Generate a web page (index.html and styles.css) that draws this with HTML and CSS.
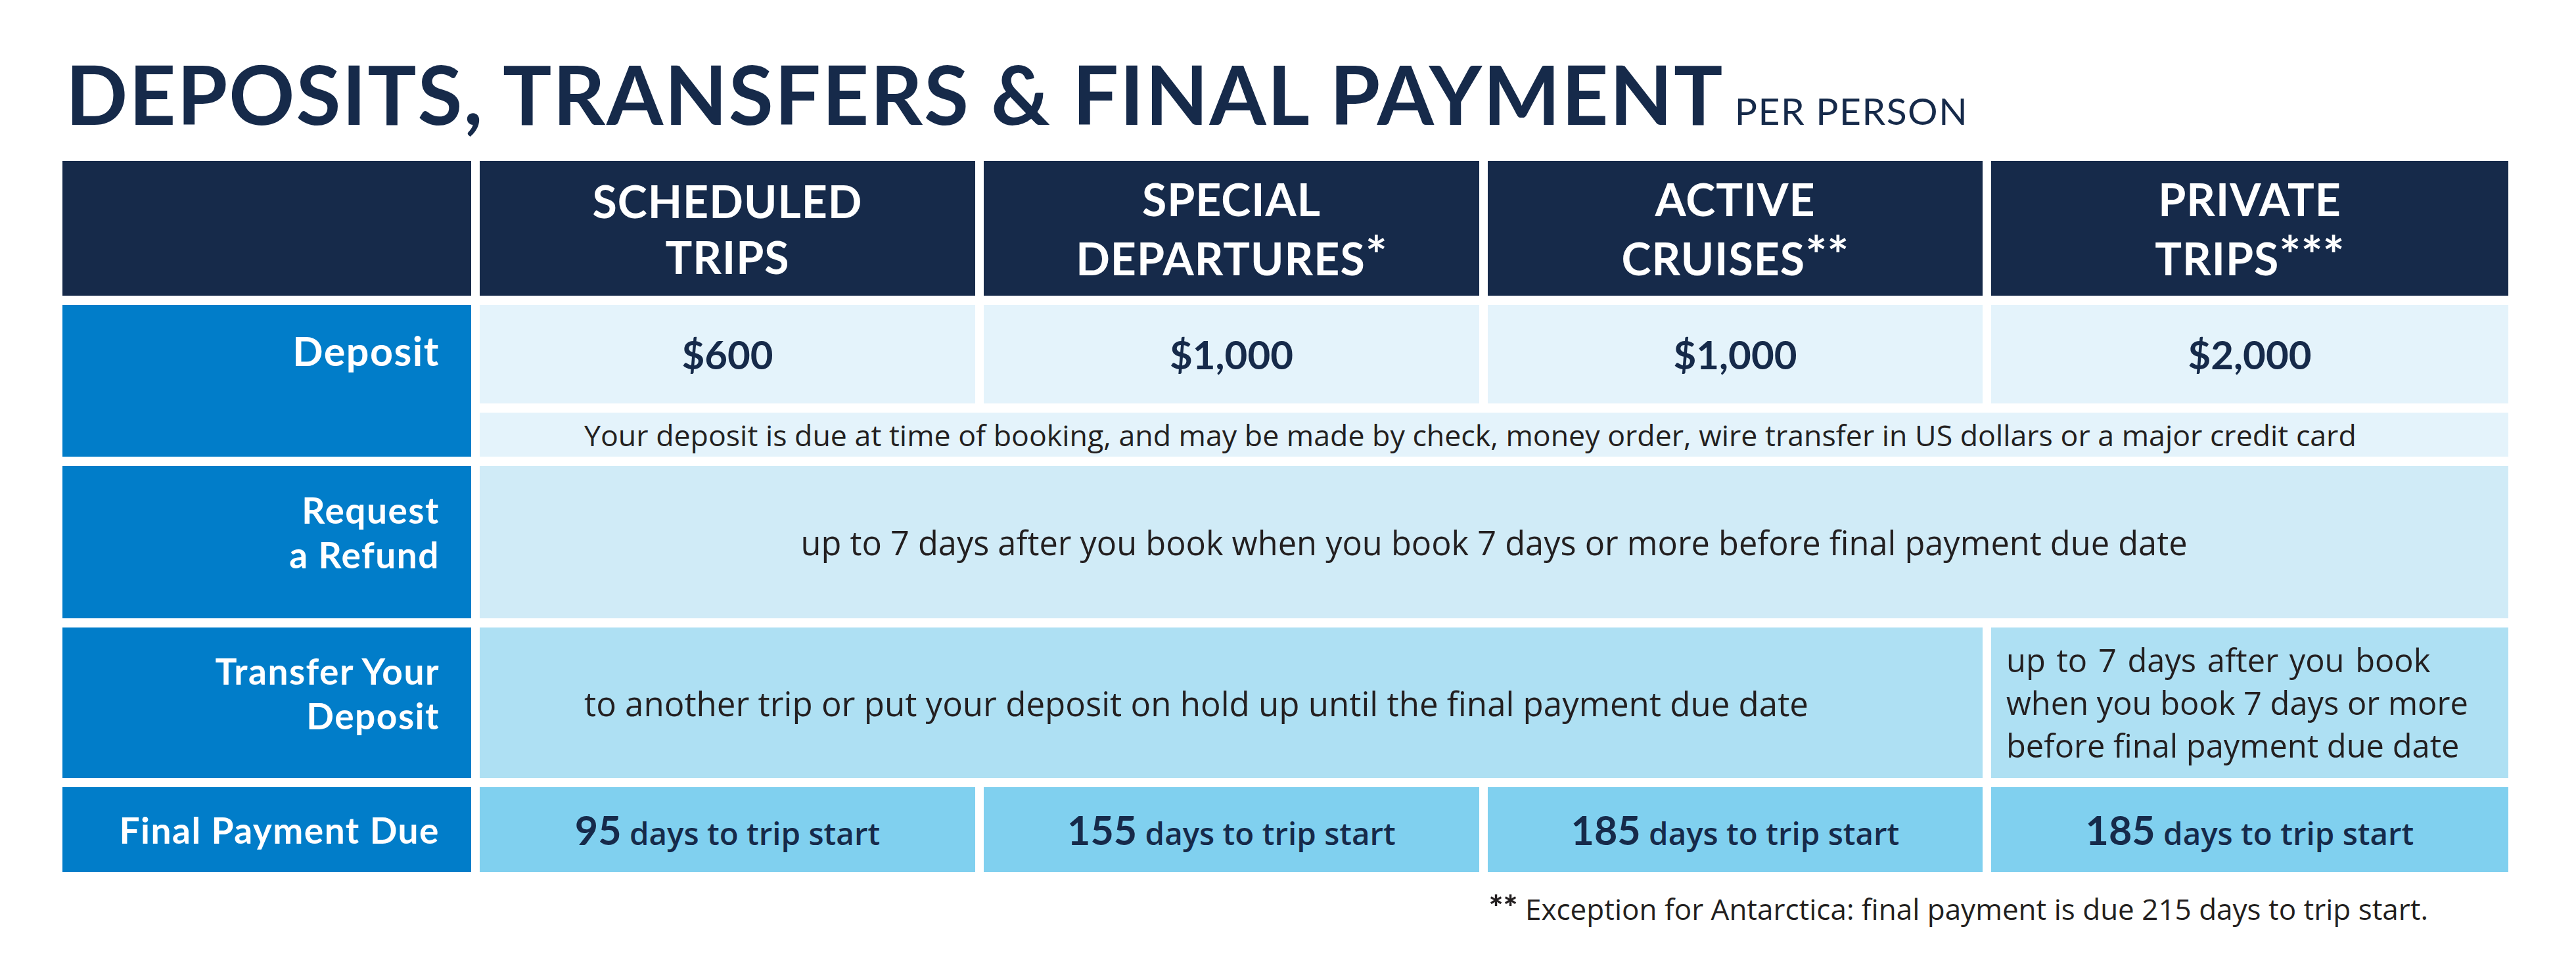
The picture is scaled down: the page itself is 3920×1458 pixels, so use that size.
FILE: index.html
```html
<!DOCTYPE html>
<html lang="en">
<head>
<meta charset="utf-8">
<title>Deposits, Transfers &amp; Final Payment</title>
<link rel="stylesheet" href="styles.css">
</head>
<body>
<div class="page">
  <h1 class="title">DEPOSITS, TRANSFERS &amp; FINAL PAYMENT <span class="per">PER PERSON</span></h1>
  <div class="table">
    <div class="cell head corner"></div>
    <div class="cell head"><p class="txt">SCHEDULED<br>TRIPS</p></div>
    <div class="cell head"><p class="txt">SPECIAL<br>DEPARTURES<span class="ast">*</span></p></div>
    <div class="cell head"><p class="txt">ACTIVE<br>CRUISES<span class="ast">**</span></p></div>
    <div class="cell head"><p class="txt">PRIVATE<br>TRIPS<span class="ast">***</span></p></div>

    <div class="cell label label-deposit"><p class="txt">Deposit</p></div>
    <div class="cell amount"><p class="txt">$600</p></div>
    <div class="cell amount"><p class="txt">$1,000</p></div>
    <div class="cell amount"><p class="txt">$1,000</p></div>
    <div class="cell amount"><p class="txt">$2,000</p></div>
    <div class="cell note"><p class="txt">Your deposit is due at time of booking, and may be made by check, money order, wire transfer in US dollars or a major credit card</p></div>

    <div class="cell label label-multi"><p class="txt">Request<br>a Refund</p></div>
    <div class="cell refund"><p class="txt">up to 7 days after you book when you book 7 days or more before final payment due date</p></div>

    <div class="cell label label-multi"><p class="txt">Transfer Your<br>Deposit</p></div>
    <div class="cell transfer"><p class="txt">to another trip or put your deposit on hold up until the final payment due date</p></div>
    <div class="cell transfer-private"><p class="txt"><span class="wide">up to 7 days after you book</span><br>when you book 7 days or more<br>before final payment due date</p></div>

    <div class="cell label"><p class="txt">Final Payment Due</p></div>
    <div class="cell final"><p class="txt"><b>95</b> days to trip start</p></div>
    <div class="cell final"><p class="txt"><b>155</b> days to trip start</p></div>
    <div class="cell final"><p class="txt"><b>185</b> days to trip start</p></div>
    <div class="cell final"><p class="txt"><b>185</b> days to trip start</p></div>
  </div>
  <p class="footnote"><b>**</b> Exception for Antarctica: final payment is due 215 days to trip start.</p>
</div>
</body>
</html>
```

FILE: styles.css
```css
html, body {
  margin: 0;
  padding: 0;
  background: #ffffff;
}
.page {
  width: 3920px;
  height: 1458px;
  font-family: "Lato", "Noto Sans", sans-serif;
  color: #162a4a;
  box-sizing: border-box;
  padding-top: 80px;
}
.title {
  margin: 0 0 0 100px;
  font-size: 124px;
  line-height: 124px;
  height: 165px;
  font-weight: 700;
  letter-spacing: 2px;
  color: #162a4a;
  white-space: nowrap;
}
.per {
  font-size: 57px;
  font-weight: 400;
  letter-spacing: 1.5px;
  margin-left: -12px;
}
.table {
  margin-left: 95px;
  display: grid;
  grid-template-columns: 622px 754px 754px 753px 787px;
  grid-template-rows: 205px 150px 67px 232px 229px 129px;
  column-gap: 13px;
  row-gap: 14px;
  width: 3722px;
}
.cell {
  display: flex;
  align-items: center;
  box-sizing: border-box;
}
.txt {
  margin: 0;
}
.head {
  background: #162a4a;
  color: #ffffff;
  font-weight: 700;
  font-size: 68px;
  line-height: 85px;
  justify-content: center;
  text-align: center;
  letter-spacing: 1px;
}
.ast {
  font-size: 78px;
  vertical-align: 2px;
  letter-spacing: 0;
}
.label {
  background: #017dc9;
  color: #ffffff;
  font-weight: 700;
  font-size: 55px;
  line-height: 68px;
  justify-content: flex-end;
  text-align: right;
  padding-right: 48px;
  letter-spacing: 1.5px;
}
.label-multi {
  padding-bottom: 30px;
}
.label-deposit {
  grid-row: span 2;
  align-items: flex-start;
  padding-top: 32px;
  font-size: 61px;
  line-height: 76px;
}
.amount {
  background: #e4f3fb;
  justify-content: center;
  font-weight: 700;
  font-size: 60px;
  color: #162a4a;
}
.note, .refund, .transfer, .transfer-private, .footnote {
  font-family: "Open Sans", "Lato", sans-serif;
  color: #231f20;
}
.note {
  grid-column: 2 / span 4;
  background: #e4f3fb;
  font-size: 44.7px;
  padding-left: 159px;
  white-space: nowrap;
}
.refund {
  grid-column: 2 / span 4;
  background: #d0ebf7;
  font-size: 50.5px;
  justify-content: center;
  white-space: nowrap;
}
.transfer {
  grid-column: 2 / span 3;
  background: #aee0f3;
  font-size: 51px;
  padding-left: 159px;
  white-space: nowrap;
}
.transfer-private {
  background: #aee0f3;
  font-size: 48.8px;
  line-height: 65px;
  padding-left: 23px;
  white-space: nowrap;
}
.wide {
  word-spacing: 4px;
}
.final {
  background: #80d0ef;
  justify-content: center;
  font-family: "Open Sans", "Lato", sans-serif;
  font-weight: 600;
  font-size: 47.5px;
  color: #162a4a;
  white-space: nowrap;
}
.final b {
  font-family: "Lato", sans-serif;
  font-size: 61px;
  font-weight: 700;
}
.footnote {
  margin: 22px 225px 0 0;
  text-align: right;
  font-size: 44px;
}
.footnote b {
  font-family: "Lato", sans-serif;
  font-size: 52px;
  font-weight: 900;
}
```
